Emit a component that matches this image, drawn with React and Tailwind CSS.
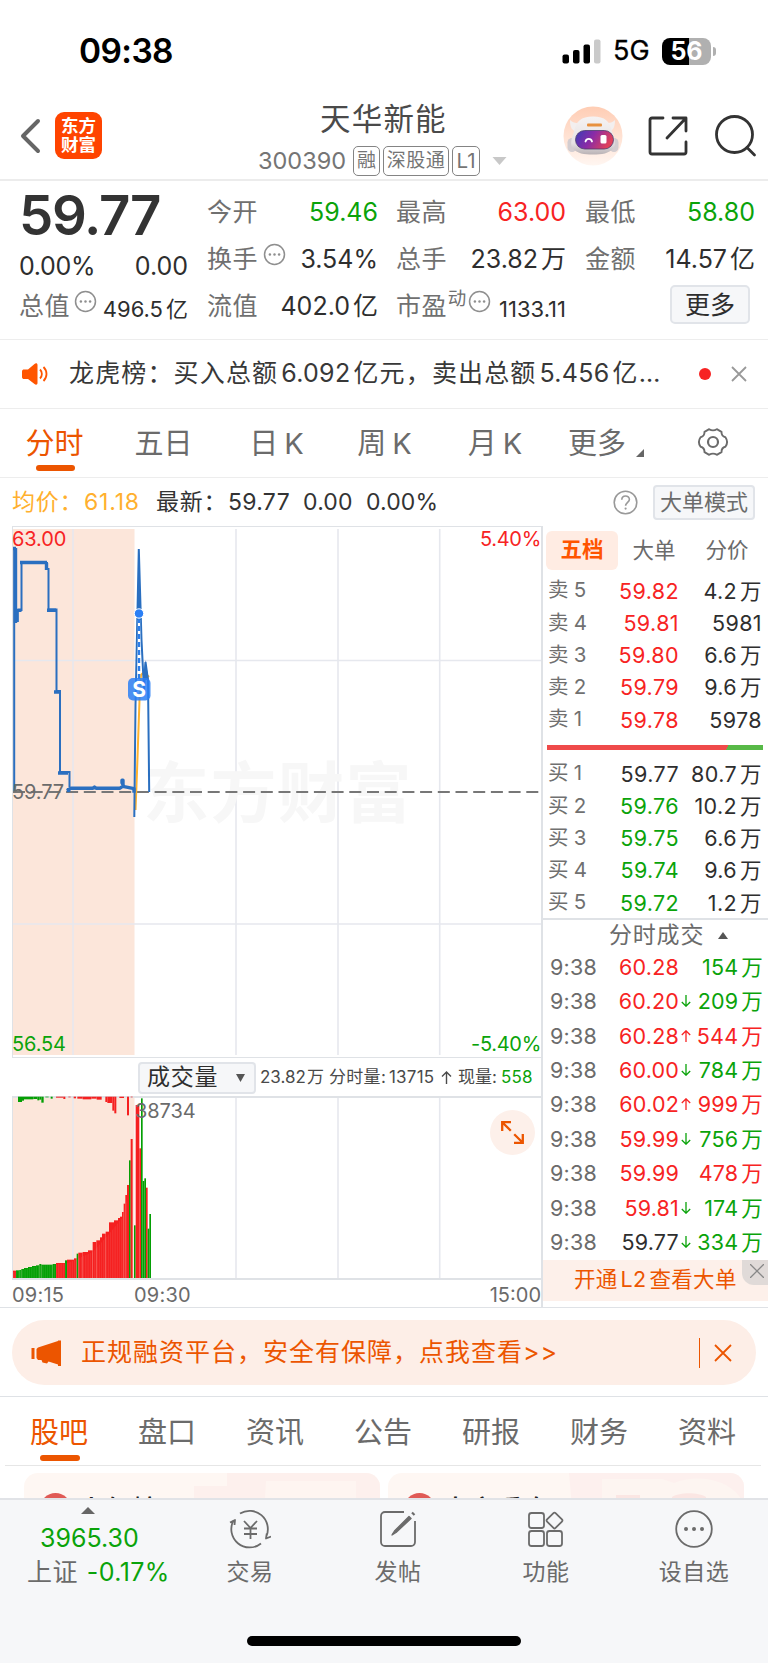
import { useState } from "react";
import clsx from "clsx";

const RED = "text-[#f72323]";
const GREEN = "text-[#0aa30a]";
const DARK = "text-[#2e2e2e]";

const chartTabs = [
  { label: "分时", width: "w-[109px]" },
  { label: "五日", width: "w-[109px]" },
  { label: "日 K", width: "w-[117px]" },
  { label: "周 K", width: "w-[99px]" },
  { label: "月 K", width: "w-[122px]" },
];

const asks = [
  ["卖 5", "59.82", "4.2万", RED],
  ["卖 4", "59.81", "5981", RED],
  ["卖 3", "59.80", "6.6万", RED],
  ["卖 2", "59.79", "9.6万", RED],
  ["卖 1", "59.78", "5978", RED],
];

const bids = [
  ["买 1", "59.77", "80.7万", DARK],
  ["买 2", "59.76", "10.2万", GREEN],
  ["买 3", "59.75", "6.6万", GREEN],
  ["买 4", "59.74", "9.6万", GREEN],
  ["买 5", "59.72", "1.2万", GREEN],
];

const trades = [
  { price: "60.28", dir: "", vol: "154万", priceColor: RED, volColor: GREEN },
  { price: "60.20", dir: "down", vol: "209万", priceColor: RED, volColor: GREEN },
  { price: "60.28", dir: "up", vol: "544万", priceColor: RED, volColor: RED },
  { price: "60.00", dir: "down", vol: "784万", priceColor: RED, volColor: GREEN },
  { price: "60.02", dir: "up", vol: "999万", priceColor: RED, volColor: RED },
  { price: "59.99", dir: "down", vol: "756万", priceColor: RED, volColor: GREEN },
  { price: "59.99", dir: "", vol: "478万", priceColor: RED, volColor: RED },
  { price: "59.81", dir: "down", vol: "174万", priceColor: RED, volColor: GREEN },
  { price: "59.77", dir: "down", vol: "334万", priceColor: DARK, volColor: GREEN },
];

// [x start, x end, top, color] in thirds of a pixel, base line at 713
const volumeBars = [
  [37, 48, 692, "r"], [48, 58, 691, "g"], [58, 64, 690, "g"], [64, 72, 687, "g"],
  [72, 84, 684, "g"], [84, 96, 681, "g"], [96, 108, 678, "g"], [108, 118, 676, "g"],
  [118, 124, 672, "g"], [124, 158, 674, "g"], [158, 168, 672, "g"], [168, 195, 669, "r"],
  [195, 201, 661, "g"], [201, 222, 659, "r"], [222, 230, 655, "r"], [230, 235, 641, "g"],
  [235, 248, 638, "r"], [248, 264, 636, "r"], [264, 278, 631, "r"], [278, 289, 606, "r"],
  [289, 300, 601, "r"], [300, 306, 592, "r"], [306, 317, 581, "r"], [317, 327, 575, "r"],
  [327, 342, 547, "r"], [342, 354, 541, "r"], [354, 360, 534, "r"], [360, 366, 530, "r"],
  [366, 371, 516, "r"], [371, 376, 491, "r"], [376, 381, 465, "r"], [381, 387, 435, "r"],
  [387, 392, 361, "g"], [392, 398, 297, "r"], [402, 407, 556, "g"], [407, 418, 195, "r"],
  [418, 423, 325, "r"], [423, 428, 175, "g"], [428, 433, 423, "g"], [433, 438, 415, "g"],
  [438, 443, 443, "r"], [443, 448, 566, "g"], [448, 453, 522, "g"],
];

// bars hanging from the top line: [x start, x end, bottom, color]
const hangingBars = [
  [36, 39, 178, "g"], [54, 66, 186, "g"], [66, 72, 182, "g"], [72, 100, 178, "g"],
  [100, 112, 177, "g"], [112, 118, 181, "g"], [118, 124, 179, "g"], [124, 131, 188, "g"],
  [136, 146, 172, "g"], [152, 158, 176, "g"], [168, 190, 173, "r"], [190, 196, 177, "r"],
  [205, 212, 172, "r"], [221, 228, 175, "r"], [232, 248, 176, "r"], [248, 274, 178, "r"],
  [274, 290, 176, "r"], [290, 305, 179, "r"], [316, 322, 186, "r"], [322, 337, 189, "r"],
  [337, 343, 212, "r"], [343, 349, 220, "r"], [358, 372, 174, "r"], [381, 387, 226, "r"],
  [392, 398, 172, "r"],
];

const bottomTabs = ["股吧", "盘口", "资讯", "公告", "研报", "财务", "资料"];

// Number with its Chinese unit slightly detached
function Num({ value, className }) {
  const unit = /[万亿]$/.test(value) ? value.slice(-1) : "";
  const num = unit ? value.slice(0, -1) : value;
  return (
    <span className={clsx("whitespace-nowrap", className)}>
      {num}
      {unit && <span className="ml-[3px]">{unit}</span>}
    </span>
  );
}

function Dots({ className }) {
  return (
    <svg viewBox="0 0 24 24" className={clsx("size-[23px] shrink-0", className)} fill="none">
      <circle cx="12" cy="12" r="10.4" stroke="#8f8f8f" strokeWidth="1.6" />
      <circle cx="7.2" cy="12" r="1.3" fill="#8f8f8f" />
      <circle cx="12" cy="12" r="1.3" fill="#8f8f8f" />
      <circle cx="16.8" cy="12" r="1.3" fill="#8f8f8f" />
    </svg>
  );
}

function StatusBar() {
  return (
    <div className="h-[98px] flex justify-between pt-[30px] pl-[79px] pr-[52px] text-black">
      <div className="text-[33.5px] leading-[42px] font-semibold tracking-[-0.6px]">09:38</div>
      <div className="flex items-center h-[42px]">
        <svg className="w-[39px] h-[25px]" viewBox="0 0 39 25">
          <rect x="0.5" y="15.5" width="6.5" height="9" rx="2" fill="#000" />
          <rect x="11" y="11" width="6.5" height="13.5" rx="2" fill="#000" />
          <rect x="21.5" y="5.5" width="6.5" height="19" rx="2" fill="#000" />
          <rect x="32" y="0.5" width="6.5" height="24" rx="2" fill="#cacaca" />
        </svg>
        <span className="ml-[12px] w-[37px] text-[27px] leading-[42px] tracking-[0.1px] [-webkit-text-stroke:0.3px_black]">5G</span>
        <div className="ml-[12px] w-[49px] h-[27px] rounded-[8px] bg-[linear-gradient(90deg,#000_56%,#b0b0b0_56%)] text-white text-[25px] leading-[27px] font-bold text-center">
          56
        </div>
        <div className="ml-[2px] w-[3px] h-[9px] rounded-r-full bg-[#b0b0b0]"></div>
      </div>
    </div>
  );
}

function Robot() {
  return (
    <svg className="size-[60px]" viewBox="0 0 60 60">
      <defs>
        <linearGradient id="halo" x1="0" y1="0" x2="0" y2="1">
          <stop offset="0" stopColor="#ffcdb4" />
          <stop offset="1" stopColor="#fff6f1" />
        </linearGradient>
        <linearGradient id="visor" x1="0" y1="0" x2="1" y2="0.3">
          <stop offset="0" stopColor="#3a3cb8" />
          <stop offset="0.5" stopColor="#8a2ba6" />
          <stop offset="1" stopColor="#e0405c" />
        </linearGradient>
        <linearGradient id="shell" x1="0" y1="0" x2="0" y2="1">
          <stop offset="0" stopColor="#f6f3f3" />
          <stop offset="0.7" stopColor="#e6e2e3" />
          <stop offset="1" stopColor="#b9b2b5" />
        </linearGradient>
      </defs>
      <circle cx="30" cy="30" r="29.5" fill="url(#halo)" />
      <path d="M7 14c0 8 2 11 8 12l7-10c-5 2-11 2-15-2zM52 14c0 8-2 11-8 12l-7-10c5 2 11 2 15-2z" fill="#f3efef" />
      <rect x="4.5" y="32" width="9" height="14" rx="4.5" fill="#d3cdd0" />
      <rect x="46.5" y="32" width="9" height="14" rx="4.5" fill="#d3cdd0" />
      <path d="M30 10.5c12 0 17 5 19 15 3 8 4 14 1 17-4 5-11 6-20 6s-16-1-20-6c-3-3-2-9 1-17 2-10 7-15 19-15z" fill="url(#shell)" />
      <rect x="24" y="17.5" width="15" height="3" rx="1" fill="#e8913f" />
      <rect x="12.5" y="24.5" width="38" height="18.5" rx="9.2" fill="url(#visor)" stroke="#4b3a6b" strokeWidth="0.8" />
      <path d="M22.5 35.5c1-3.5 5.5-3.5 6.5 0" fill="none" stroke="#fff" strokeWidth="1.8" strokeLinecap="round" />
      <rect x="37.5" y="29" width="6" height="8.5" rx="1.5" fill="#fff" />
    </svg>
  );
}

function Header() {
  return (
    <header className="h-[83px] flex border-b-2 border-[#ececec]">
      <svg className="ml-[19px] mt-[20px] w-[23px] h-[36px]" viewBox="0 0 23 36" fill="none" stroke="#666" strokeWidth="4" strokeLinecap="round" strokeLinejoin="round">
        <path d="M19 3 4 18l15 15" />
      </svg>
      <div className="ml-[13px] mt-[14px] size-[47px] rounded-[9px] bg-[#ff4400] text-white text-[17.5px] leading-[18.5px] font-bold text-center pt-[5px]">
        东方
        <br />
        财富
      </div>
      <div className="ml-[156px] w-[250px]">
        <div className="ml-[62px] mt-[1px] text-[30.5px] leading-[40px] tracking-[1.2px] text-[#4a4a4a]">天华新能</div>
        <div className="flex items-center h-[31px] mt-[6px] text-[#757575]">
          <span className="w-[95px] text-[23.5px]">300390</span>
          <span className="w-[27px] h-[30px] border-[1.5px] border-[#848484] rounded-[5px] text-[19px] leading-[27px] text-center">融</span>
          <span className="ml-[3px] w-[66px] h-[30px] border-[1.5px] border-[#848484] rounded-[5px] text-[19px] leading-[27px] text-center tracking-[0.5px]">深股通</span>
          <span className="ml-[3px] w-[28px] h-[30px] border-[1.5px] border-[#848484] rounded-[5px] text-[20.5px] leading-[27px] text-center">L1</span>
          <svg className="ml-[12px] w-[15px] h-[8px] shrink-0" viewBox="0 0 15 8"><path d="M0.5 0h14l-7 8z" fill="#c8c8c8" /></svg>
        </div>
      </div>
      <div className="ml-[55px] mt-[8px] flex">
        <Robot />
        <svg className="ml-[24px] mt-[9px] size-[42px]" viewBox="0 0 42 42" fill="none" stroke="#333" strokeWidth="2.8" strokeLinecap="round" strokeLinejoin="round">
          <path d="M16 3H5a2 2 0 0 0-2 2v32a2 2 0 0 0 2 2h32a2 2 0 0 0 2-2V27" />
          <path d="M26 3h13v13M39 3 20 23" />
        </svg>
        <svg className="ml-[25px] mt-[8px] size-[44px]" viewBox="0 0 44 44" fill="none" stroke="#333" strokeWidth="2.8" strokeLinecap="round">
          <circle cx="20.5" cy="20.5" r="18" />
          <path d="m33 33.500 7.500 7.500" />
        </svg>
      </div>
    </header>
  );
}

function Stat({ label, icon, value, color = DARK, small }) {
  return (
    <div className="flex items-center justify-between h-[47px]">
      <span className="flex items-center text-[#707070] text-[25px] tracking-[0.4px]">
        {label}
        {icon}
      </span>
      <Num value={value} className={clsx(color, small ? "text-[22px] pt-[5px]" : "text-[25px]")} />
    </div>
  );
}

function Stats() {
  return (
    <section className="h-[159px] flex border-b border-[#ededed] pt-[8px]">
      <div className="ml-[19px] w-[169px]">
        <div className="h-[54px] text-[54.5px] leading-[53px] font-semibold tracking-[-1.3px] text-[#333]">59.77</div>
        <div className="flex justify-between h-[46px] leading-[46px] text-[25px] text-[#2e2e2e]">
          <span className="tracking-[-0.3px]">0.00%</span>
          <span>0.00</span>
        </div>
        <div className="-mt-[6px]">
          <Stat label="总值" icon={<Dots className="ml-[4px] mb-[11px]" />} value="496.5亿" small />
        </div>
      </div>
      <div className="ml-[19px] w-[171px]">
        <Stat label="今开" value="59.46" color={GREEN} />
        <Stat label="换手" icon={<Dots className="ml-[5px] mb-[11px]" />} value="3.54%" />
        <Stat label="流值" value="402.0亿" />
      </div>
      <div className="ml-[18px] w-[170px]">
        <Stat label="最高" value="63.00" color={RED} />
        <Stat label="总手" value="23.82万" />
        <Stat
          label="市盈"
          icon={
            <>
              <span className="ml-[1px] text-[18.5px] mb-[15px]">动</span>
              <Dots className="ml-[1px] mb-[11px]" />
            </>
          }
          value="1133.11"
          small
        />
      </div>
      <div className="ml-[19px] w-[170px]">
        <Stat label="最低" value="58.80" color={GREEN} />
        <Stat label="金额" value="14.57亿" />
        <button className="block ml-[85px] mt-[2px] w-[80px] h-[39px] rounded-[5px] border-2 border-[#e1e4e9] bg-[#f6f7f9] text-[25px] leading-[34px] text-[#2e2e2e]">更多</button>
      </div>
    </section>
  );
}

function News() {
  return (
    <section className="h-[69px] flex items-center border-b border-[#ededed] text-[25px] text-[#383838]">
      <svg className="ml-[22px] w-[26px] h-[22px]" viewBox="0 0 26 22">
        <path d="M0 8.5C0 7 1 6.5 2 6.5h4L12.5 1c1.5-1.2 3-.6 3 1v18c0 1.6-1.5 2.2-3 1L6 16H2c-1 0-2-.6-2-2z" fill="#ff5500" />
        <path d="M18 6.5c2.5 2.5 2.5 6.5 0 9M21.5 4c4 4 4 10 0 14" fill="none" stroke="#ff5500" strokeWidth="1.8" />
      </svg>
      <span className="ml-[21px] w-[601px] tracking-[1.15px] whitespace-nowrap">
        龙虎榜：买入总额<span className="mx-[3px] tracking-[0.3px]">6.092</span>亿元，卖出总额
        <span className="mx-[3px] tracking-[0.3px]">5.456</span>亿…
      </span>
      <span className="ml-[29px] size-[12px] rounded-full bg-[#f72323]"></span>
      <svg className="ml-[20px] size-[16px]" viewBox="0 0 16 16" stroke="#999" strokeWidth="1.8"><path d="m1 1 14 14M15 1 1 15" /></svg>
    </section>
  );
}

function ChartTabs({ active, onChange }) {
  return (
    <nav className="h-[69px] flex border-b border-[#ededed] text-[29px] leading-[67px] text-[#6b6b6b]">
      {chartTabs.map((tab) => (
        <button
          key={tab.label}
          onClick={() => onChange(tab.label)}
          className={clsx("relative h-full whitespace-nowrap [word-spacing:-2px]", tab.width, active === tab.label && "text-[#ec5500]")}
        >
          {tab.label}
          {active === tab.label && (
            <span className="absolute left-[36px] top-[56px] w-[39px] h-[6px] rounded-full bg-[#ec5500]"></span>
          )}
        </button>
      ))}
      <button className="w-[101px] h-full flex items-center pl-[12px]">
        更多
        <svg className="ml-[10px] mt-[20px] size-[8px]" viewBox="0 0 8 8"><path d="M8 0v8H0z" fill="#666" /></svg>
      </button>
      <button className="w-[111px] h-full flex items-center justify-center pb-[3px]">
        <svg className="size-[32px]" viewBox="0 0 32 32" fill="none" stroke="#6b6b6b" strokeWidth="1.9" strokeLinejoin="round">
          <path d="M12.2 3.2Q16 5.6 19.8 3.2L24.5 5.8Q24.400 10.4 28.4 11.2Q31.8 16 28.4 20.8Q24.400 21.6 24.5 26.2L19.8 28.8Q16 26.4 12.2 28.8L7.5 26.2Q7.600 21.6 3.6 20.8Q.2 16 3.6 11.2Q7.600 10.4 7.5 5.8Z" />
          <circle cx="16" cy="16" r="5" strokeWidth="2.2" />
        </svg>
      </button>
    </nav>
  );
}

function PriceInfo() {
  return (
    <div className="h-[48px] flex items-center pl-[12px] text-[23px] leading-[48px] text-[#333] whitespace-nowrap">
      <span className="w-[72px] text-[#ffb02e] tracking-[0.8px]">均价：</span>
      <span className="w-[72px] text-[#ffb02e] tracking-[0.8px]">61.18</span>
      <span className="w-[72px] tracking-[0.8px]">最新：</span>
      <span className="w-[75px] tracking-[0.3px]">59.77</span>
      <span className="w-[63px] tracking-[0.2px]">0.00</span>
      <span className="w-[247px] tracking-[0.1px]">0.00%</span>
      <svg className="size-[25px]" viewBox="0 0 25 25" fill="none">
        <circle cx="12.5" cy="12.5" r="11.3" stroke="#999" strokeWidth="1.6" />
        <path d="M8.8 9.8c0-5.2 7.6-4.8 7.6-.4 0 2.8-3.8 3.2-3.8 6.4" stroke="#999" strokeWidth="1.6" />
        <circle cx="12.6" cy="18.6" r="1.1" fill="#999" />
      </svg>
      <button className="ml-[15px] w-[102px] h-[35px] rounded-[4px] border-2 border-[#e1e4e9] bg-[#f6f7f9] text-[22px] leading-[31px] text-[#6b6b6b]">大单模式</button>
    </div>
  );
}

function PriceChart() {
  return (
    <div className="relative h-[532px] w-[530px] border-y border-l border-[#dfe2e6]">
      <svg className="absolute left-0 top-0 w-[530px] h-[530px]" viewBox="13 527 530 530" fill="none">
        <rect x="13" y="529" width="121.5" height="526" fill="#fce6da" />
        <g stroke="#e6e8ee" strokeWidth="1.6">
          <path d="M73 529v526M236 529v526M338 529v526M439.700 529v526M13 660.500h529M13 924h529" />
        </g>
        <text x="143" y="817" fontSize="66" fontWeight="700" fill="#f7f7f7" letterSpacing="1.5">东方财富</text>
        <path d="M13 792h529" stroke="#777" strokeWidth="2" strokeDasharray="12 5.7" />
        <path d="M135.500 810 137 772 139.500 700 141 675 144 672 149 677" stroke="#ffb22e" strokeWidth="2" />
        <path d="M14.200 791V548M15.500 548v75M17.500 622v-12h4v-47h25.500v6h1.500v40.500h8v81.500h3.500v81h9.500v15.500" stroke="#2a6fc0" strokeWidth="2" />
        <path d="M13 548.500h3M15.500 548v75M17 610v12M17.500 610.300h4M20 562.500h27M46.500 563v7M47 610.300h9M54 692h5M58 773h10M68.500 792v-4M67 791l4-2.800h22l1.500-1.200 1.500 1.200h24l3-2v-6h-1v2.500l2 4 10 2v4" stroke="#2a6fc0" strokeWidth="3.4" strokeLinejoin="round" />
        <path d="M134.300 817 135.500 705 138.800 549 141.500 640 144 690 145.500 662 148 680 149.200 792" stroke="#2a6fc0" strokeWidth="2" />
        <path d="M139 549 136.800 640 137 612h4l-.3 20zM145.300 660l-2.500 20h6z" fill="#2a6fc0" />
        <path d="M139 620v58" stroke="#fff" strokeWidth="2.4" />
        <path d="M139 618v62" stroke="#2b7de9" strokeWidth="2.4" strokeDasharray="5 3" />
        <circle cx="139" cy="613.5" r="4.7" fill="#2b7ff5" stroke="#fff" strokeWidth="1" />
        <rect x="128" y="678" width="22.5" height="22.5" rx="5" fill="#2b7ff5" fillOpacity="0.85" />
        <text x="139.2" y="697" fontSize="21" fontWeight="700" fill="#fff" textAnchor="middle">S</text>
      </svg>
      <span className="absolute left-[-1px] top-0 text-[20px] leading-[24px] tracking-[-0.1px] text-[#f72323]">63.00</span>
      <span className="absolute right-[1px] top-0 text-[20px] leading-[24px] tracking-[-0.3px] text-[#f72323]">5.40%</span>
      <span className="absolute left-[-1px] top-[253px] text-[20px] leading-[24px] tracking-[-0.1px] text-[#6b6b6b]">59.77</span>
      <span className="absolute left-[-1px] top-[505px] text-[20px] leading-[24px] tracking-[-0.1px] text-[#0aa30a]">56.54</span>
      <span className="absolute right-[1px] top-[505px] text-[20px] leading-[24px] tracking-[-0.3px] text-[#0aa30a]">-5.40%</span>
    </div>
  );
}

function VolumeChart() {
  const color = (c) => (c === "r" ? "#f52020" : "#049f04");
  return (
    <>
      <div className="flex items-center h-[38px] pl-[126px] pt-[1px] text-[17px] text-[#4a4a4a] whitespace-nowrap">
        <div className="w-[118px] h-[32px] flex items-center rounded-[4px] border-2 border-[#e1e4e9] bg-[#f6f7f9] text-[23px] tracking-[0.8px] text-[#2e2e2e] pl-[7px]">
          成交量
          <svg className="ml-[18px] w-[9px] h-[8px]" viewBox="0 0 9 8"><path d="M0 0h9L4.5 8z" fill="#555" /></svg>
        </div>
        <span className="ml-[4px] w-[69px]">
          23.82<span className="ml-[1px]">万</span>
        </span>
        <span className="w-[60px] tracking-[0.3px]">分时量:</span>
        <span className="w-[52px] tracking-[0.2px]">13715</span>
        <svg className="w-[11px] h-[13px]" viewBox="0 0 11 13" fill="none" stroke="#4a4a4a" strokeWidth="1.4"><path d="M5.5 13V1M1 5.5 5.5 1 10 5.5" /></svg>
        <span className="ml-[6px] w-[43px]">现量:</span>
        <span className="text-[#0aa30a] tracking-[0.2px]">558</span>
      </div>
      <div className="relative h-[184px] w-[530px] border-y-2 border-l border-[#dfe2e6]">
        <svg className="absolute left-0 -top-[2px] w-[529px] h-[182px]" viewBox="13 1096 529 182">
          <rect x="13" y="1098" width="121.5" height="180" fill="#fce6da" />
          <path d="M73 1098v180M236 1098v180M338 1098v180M439.700 1098v180" stroke="#e6e8ee" strokeWidth="1.6" />
          <g transform="translate(0 1040) scale(0.33333)">
            {volumeBars.map(([x1, x2, top, c]) => (
              <rect key={x1} x={x1} y={top} width={x2 - x1} height={714 - top} fill={color(c)} />
            ))}
            {hangingBars.map(([x1, x2, bottom, c]) => (
              <rect key={x1} x={x1} y={170} width={x2 - x1} height={bottom - 170} fill={color(c)} />
            ))}
          </g>
          {/* hairlines between the minute bars */}
          <path d="M13 1233h119" stroke="#fff" strokeOpacity="0.15" strokeWidth="90" strokeDasharray="0.5 1.3" clipPath="url(#bars)" />
          <clipPath id="bars">
            <path d="M13 1278v-6l25-6 30-3 25-11 16-18 14-17 5-22v83z" />
          </clipPath>
        </svg>
        <span className="absolute left-[122px] top-0 text-[20px] leading-[26px] tracking-[-0.1px] text-[#6b6b6b]">38734</span>
        <div className="absolute left-[477px] top-[12px] size-[45px] rounded-full bg-[#fdf0ea] flex items-center justify-center">
          <svg className="size-[23px]" viewBox="0 0 23 23" fill="none" stroke="#ec5500" strokeWidth="2.3">
            <path d="M1.2 10V1.2H10M1.2 1.2l8.6 8.6M21.8 13v8.8H13M21.8 21.8l-8.6-8.6" />
          </svg>
        </div>
      </div>
      <div className="flex justify-between h-[27px] w-[529px] text-[20px] leading-[30px] text-[#6b6b6b]">
        <span className="w-[122px] tracking-[0.2px]">09:15</span>
        <span className="grow tracking-[0.2px]">09:30</span>
        <span>15:00</span>
      </div>
    </>
  );
}

function Quote({ row }) {
  const [label, price, amount, color] = row;
  return (
    <div className="flex items-center h-[32.3px] pt-[1px] text-[21.5px] tracking-[0.4px]">
      <span className="w-[50px] text-[#707070] text-[20.5px] tracking-[-0.3px]">{label}</span>
      <span className={clsx("w-[81px] text-right", color)}>{price}</span>
      <Num className="w-[83px] text-right text-[#2e2e2e]" value={amount} />
    </div>
  );
}

function SidePanel() {
  return (
    <aside className="w-[227px] border-l-2 border-[#dfe2e6]">
      <div className="flex items-center h-[48px] pl-[3px] text-[21.5px] text-[#6b6b6b]">
        <span className="w-[72px] h-[39px] rounded-[6px] bg-[#ffece3] text-center leading-[37px] font-bold text-[#ff5500]">五档</span>
        <span className="w-[72px] text-center">大单</span>
        <span className="w-[74px] text-center">分价</span>
      </div>
      <div className="pl-[5px]">
        {asks.map((row) => <Quote key={row[0]} row={row} />)}
      </div>
      <div className="ml-[4px] mt-[9.5px] mb-[7px] w-[216px] h-[5px] bg-[linear-gradient(120deg,#ef4a4a_83%,#57b947_83%)]"></div>
      <div className="pl-[5px]">
        {bids.map((row) => <Quote key={row[0]} row={row} />)}
      </div>
      <div className="h-[31px] border-t-2 border-[#dfe2e6] flex items-center pt-[1px] pl-[66px] text-[23px] tracking-[0.8px] text-[#6b6b6b]">
        分时成交
        <svg className="ml-[14px] w-[10px] h-[7px]" viewBox="0 0 10 7"><path d="M5 0l5 7H0z" fill="#555" /></svg>
      </div>
      <div className="pl-[7px]">
        {trades.map((t, i) => (
          <div key={i} className="flex items-center h-[34.4px] pt-[0.5px] text-[21.5px] tracking-[0.2px]">
            <span className="w-[50px] text-[#6b6b6b]">9:38</span>
            <span className={clsx("w-[79px] text-right", t.priceColor)}>{t.price}</span>
            <svg className={clsx("ml-[2px] w-[10px] h-[12px]", t.volColor, t.dir === "up" && "rotate-180", !t.dir && "invisible")} viewBox="0 0 10 12" fill="none" stroke="currentColor" strokeWidth="1.3">
              <path d="M5 0v11M.8 7 5 11.2 9.2 7" />
            </svg>
            <Num className={clsx("w-[72px] text-right", t.volColor)} value={t.vol} />
          </div>
        ))}
      </div>
      <div className="relative h-[41px] mt-[1px] bg-[#fdf0ea] pl-[31px] text-[21.5px] leading-[38px] tracking-[0.3px] text-[#ec5500] whitespace-nowrap">
        开通<span className="mx-[3px]">L2</span>查看大单
        <div className="absolute right-0 top-0 w-[26px] h-[25px] rounded-bl-[12px] bg-[#e0dad8] flex items-center justify-end pr-[4px] pb-[3px]">
          <svg className="size-[14px]" viewBox="0 0 14 14" stroke="#888" strokeWidth="1.3"><path d="m0 0 14 14M14 0 0 14" /></svg>
        </div>
      </div>
    </aside>
  );
}

function Promo() {
  return (
    <section className="h-[89px] border-b border-[#dfe2e6] pt-[12px] px-[12px]">
      <div className="h-[65px] rounded-full bg-[#fdeee7] flex items-center text-[25px] tracking-[1px] text-[#ec5500]">
        <svg className="ml-[19px] w-[31px] h-[26px]" viewBox="0 0 31 26" fill="#ec5500">
          <path d="M.5 8h3v11h-3zM7 7.5 27 1V.5h3V26h-3v-1.5l-9.5-3-1.5 2-4.5-1-1-2.5H7l-1.500-2v-9z" />
        </svg>
        <span className="ml-[19px]">正规融资平台，安全有保障，点我查看&gt;&gt;</span>
        <span className="ml-auto w-[1.5px] h-[30px] bg-[#ec5500]"></span>
        <svg className="ml-[14px] mr-[24px] size-[18px]" viewBox="0 0 18 18" stroke="#ec5500" strokeWidth="1.8"><path d="m1 1 16 16M17 1 1 17" /></svg>
      </div>
    </section>
  );
}

function NavItem({ label, children }) {
  return (
    <button className="w-[148px] flex flex-col items-center">
      <svg className="mt-[9px] w-[42px] h-[40px]" viewBox="0 0 42 40" fill="none" stroke="#6b6b6b" strokeWidth="1.8" strokeLinejoin="round">
        {children}
      </svg>
      <span className="mt-[6px] leading-[34px] tracking-[0.5px]">{label}</span>
    </button>
  );
}

function BottomNav() {
  return (
    <footer className="h-[165px] border-t-2 border-[#e1e3e7] bg-[#f6f7f9] text-[23px] text-[#6b6b6b]">
      <div className="flex h-[136px]">
        <div className="w-[176px]">
          <svg className="ml-[81px] mt-[7px] w-[14px] h-[7px]" viewBox="0 0 14 7"><path d="M7 0l7 7H0z" fill="#666" /></svg>
          <div className="mt-[7px] ml-[40px] text-[25px] leading-[34px] text-[#0aa30a]">3965.30</div>
          <div className="ml-[27px] text-[25px] leading-[34px] tracking-[0.4px] whitespace-nowrap">
            上证<span className="ml-[9px] text-[#0aa30a]">-0.17%</span>
          </div>
        </div>
        <NavItem label="交易">
          <path d="M11 4.5A18.3 18.3 0 0 1 37.5 27M32 34.5A18.3 18.3 0 0 1 4.5 11.5M1 13.5l5-2.500-.5 5M42 27.5 37 29.5l.8-5" />
          <path d="m15 12 6.5 7 6.5-7M15 19.5h13M15 25h13M21.5 19v11" />
        </NavItem>
        <NavItem label="发帖">
          <path d="M27 3H8a4 4 0 0 0-4 4v26a4 4 0 0 0 4 4h26a4 4 0 0 0 4-4V12" />
          <path d="M32 7.5 17.5 22l-2.500 4 4-2.500L34 9.500z" strokeWidth="1.4" fill="#6b6b6b" />
          <path d="m35.500 5.500 1.500-1.500" strokeWidth="3.5" />
        </NavItem>
        <NavItem label="功能">
          <rect x="4" y="4" width="15" height="15" rx="2.5" />
          <rect x="4" y="22" width="15" height="15" rx="2.5" />
          <rect x="22" y="22" width="15" height="15" rx="2.5" />
          <rect x="23.5" y="5.5" width="12" height="12" rx="1.5" transform="rotate(45 29.5 11.5)" />
        </NavItem>
        <NavItem label="设自选">
          <circle cx="21" cy="20" r="17.8" />
          <path d="M13 20h.01M21 20h.01M29 20h.01" strokeWidth="4" strokeLinecap="round" />
        </NavItem>
      </div>
      <div className="mx-auto w-[274px] h-[10px] rounded-full bg-black"></div>
    </footer>
  );
}

function Card({ title, children }) {
  return (
    <div className="relative w-[356px] h-[80px] shrink-0 rounded-[14px] overflow-hidden bg-[#fef7f3]">
      <svg className="w-[356px] h-[80px]" viewBox="0 0 356 80">{children}</svg>
      <span className="absolute left-[16px] top-[20px] size-[31px] rounded-full bg-[#e05a55]"></span>
      <span className="absolute left-[54px] top-[20px] text-[27px] leading-[36px] font-medium text-[#222]">{title}</span>
    </div>
  );
}

export default function App() {
  const [chartTab, setChartTab] = useState("分时");
  const [tab, setTab] = useState("股吧");

  return (
    <div className="w-[768px] h-[1663px] overflow-hidden bg-white font-[Inter,'Noto_Sans_CJK_SC',sans-serif]">
      <StatusBar />
      <Header />
      <Stats />
      <News />
      <ChartTabs active={chartTab} onChange={setChartTab} />
      <PriceInfo />
      <main className="flex h-[782px] border-b border-[#dfe2e6]">
        <div className="ml-[12px] w-[529px] overflow-hidden">
          <PriceChart />
          <VolumeChart />
        </div>
        <SidePanel />
      </main>
      <Promo />
      <nav className="h-[69px] ml-[5px] mr-[7px] grid grid-cols-7 border-b border-[#e6e6e6] text-[29px] leading-[71px] text-[#6b6b6b]">
        {bottomTabs.map((label) => (
          <button key={label} onClick={() => setTab(label)} className={clsx("relative h-[68px]", tab === label && "text-[#ec5500]")}>
            {label}
            {tab === label && (
              <span className="absolute left-[35px] top-[58px] w-[40px] h-[6px] rounded-full bg-[#ec5500]"></span>
            )}
          </button>
        ))}
      </nav>
      <section className="h-[32px] overflow-hidden pt-[7px] pl-[24px] flex gap-[8px]">
        <Card title="人气榜">
          <path d="M203 0h153v80H170V13h33z" fill="#fdf0ed" />
          <path d="M242 8h90v72h-94z" fill="#fef5f1" />
        </Card>
        <Card title="大家看盘">
          <path d="M181 0h175v80H188z" fill="#fdf0ee" />
          <path d="M214 6h60l12 4c20-8 50-6 66 14v56H214z" fill="#fdf5f1" />
          <path d="M228 22h24v40h-24zM284 24c8-5 26-5 34 0v40h-34z" fill="#fbe6e3" />
        </Card>
      </section>
      <BottomNav />
    </div>
  );
}
